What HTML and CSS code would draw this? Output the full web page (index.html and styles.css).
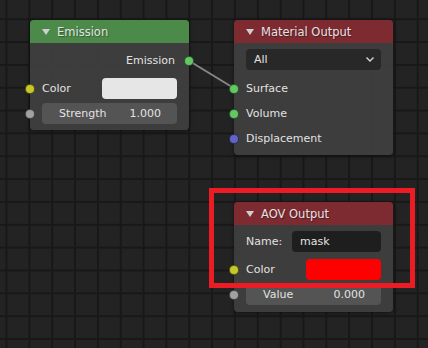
FILE: index.html
```html
<!DOCTYPE html>
<html lang="en">
<head>
    <meta charset="UTF-8">
    <title>Shader Editor</title>
    <link rel="stylesheet" href="styles.css">
</head>
<body>
    <div class="editor">
        <svg class="links" width="428" height="348">
            <line x1="188.5" y1="60.5" x2="234.5" y2="88.5" />
        </svg>

        <!-- Emission -->
        <div class="node node-emission">
            <div class="node-header header-shader">
                <svg class="collapse" width="8" height="6"><polygon points="0,0 8,0 4,6" /></svg>
                <span>Emission</span>
            </div>
            <div class="node-body">
                <div class="row row-output">
                    <span class="label">Emission</span>
                    <span class="socket socket-shader socket-out"></span>
                </div>
                <div class="row row-gap">
                    <span class="socket socket-color socket-in"></span>
                    <span class="label">Color</span>
                    <span class="swatch swatch-white"></span>
                </div>
                <div class="row row-tight">
                    <span class="socket socket-value socket-in"></span>
                    <div class="field field-num">
                        <span>Strength</span>
                        <span>1.000</span>
                    </div>
                </div>
            </div>
        </div>

        <!-- Material Output -->
        <div class="node node-material">
            <div class="node-header header-output">
                <svg class="collapse" width="8" height="6"><polygon points="0,0 8,0 4,6" /></svg>
                <span>Material Output</span>
            </div>
            <div class="node-body body-material">
                <div class="row">
                    <div class="field field-dropdown">
                        <span>All</span>
                        <svg class="chevron" width="8" height="5"><polyline points="0.5,0.5 4,4 7.5,0.5" /></svg>
                    </div>
                </div>
                <div class="row row-after-dropdown">
                    <span class="socket socket-shader socket-in"></span>
                    <span class="label">Surface</span>
                </div>
                <div class="row row-tight">
                    <span class="socket socket-shader socket-in"></span>
                    <span class="label">Volume</span>
                </div>
                <div class="row row-tight">
                    <span class="socket socket-vector socket-in"></span>
                    <span class="label">Displacement</span>
                </div>
            </div>
        </div>

        <!-- AOV Output -->
        <div class="node node-aov">
            <div class="node-header header-output">
                <svg class="collapse" width="8" height="6"><polygon points="0,0 8,0 4,6" /></svg>
                <span>AOV Output</span>
            </div>
            <div class="node-body body-aov">
                <div class="row">
                    <span class="label">Name:</span>
                    <div class="field field-text">mask</div>
                </div>
                <div class="row row-gap">
                    <span class="socket socket-color socket-in"></span>
                    <span class="label">Color</span>
                    <span class="swatch swatch-red"></span>
                </div>
                <div class="row row-tight">
                    <span class="socket socket-value socket-in"></span>
                    <div class="field field-num">
                        <span>Value</span>
                        <span>0.000</span>
                    </div>
                </div>
            </div>
        </div>

        <div class="highlight"></div>
    </div>
</body>
</html>
```

FILE: styles.css
```css
* {
    margin: 0;
    padding: 0;
    box-sizing: border-box;
}

:root {
    --canvas: #232323;
    --grid: #181818;
    --node: rgba(64, 64, 64, 0.93);
    --text: #e2e2e2;
    --green: #63c763;
    --yellow: #c7c729;
    --gray: #a1a1a1;
    --purple: #6363c7;
}

body {
    background: var(--canvas);
    font-family: 'DejaVu Sans', 'Liberation Sans', sans-serif;
    font-size: 11px;
    color: var(--text);
    overflow: hidden;
}

.editor {
    position: relative;
    width: 428px;
    height: 348px;
    background-color: var(--canvas);
    background-image:
        linear-gradient(to right, var(--grid) 1.5px, transparent 1.5px),
        linear-gradient(to bottom, var(--grid) 1.5px, transparent 1.5px);
    background-size: 22.85px 22.85px;
    background-position: 5.5px 18.2px;
}

.links {
    position: absolute;
    left: 0;
    top: 0;
}

.links line {
    stroke: #858585;
    stroke-width: 2;
    stroke-linecap: round;
}

/* nodes */
.node {
    position: absolute;
    width: 159px;
    background: var(--node);
    border-radius: 4px;
    box-shadow: 0 1px 4px rgba(0, 0, 0, 0.45);
}

.node-emission {
    left: 30px;
    top: 20px;
}

.node-material {
    left: 234px;
    top: 20px;
}

.node-aov {
    left: 234px;
    top: 202px;
}

.node-header {
    height: 23px;
    display: flex;
    align-items: center;
    padding-left: 12px;
    border-radius: 4px 4px 0 0;
    font-size: 11.5px;
    text-shadow: 1px 1px 1px rgba(0, 0, 0, 0.35);
}

.header-shader {
    background: #4c8a49;
}

.header-output {
    background: #7d2a31;
}

.collapse {
    margin-right: 7px;
    margin-top: 1px;
}

.collapse polygon {
    fill: #cfcfcf;
}

.node-body {
    padding: 7px 12px 6px;
}

.body-material {
    padding-top: 6px;
}

.body-aov {
    padding: 6px 12px 7px;
}

.row {
    position: relative;
    height: 21px;
    display: flex;
    align-items: center;
}

.row-output {
    justify-content: flex-end;
    padding-right: 2px;
}

.row-gap {
    margin-top: 7px;
}

.row-after-dropdown {
    margin-top: 8px;
}

.row-tight {
    margin-top: 4px;
}

.label {
    white-space: nowrap;
}

/* sockets */
.socket {
    position: absolute;
    top: 50%;
    width: 10px;
    height: 10px;
    margin-top: -5px;
    border-radius: 50%;
    border: 1px solid rgba(0, 0, 0, 0.55);
}

.socket-in {
    left: -17px;
}

.socket-out {
    right: -17px;
}

.socket-shader {
    background: var(--green);
}

.socket-color {
    background: var(--yellow);
}

.socket-value {
    background: var(--gray);
}

.socket-vector {
    background: var(--purple);
}

/* fields */
.swatch {
    margin-left: auto;
    width: 75px;
    height: 21px;
    border-radius: 4px;
}

.swatch-white {
    background: #e6e6e6;
}

.swatch-red {
    background: #ff0000;
}

.field {
    height: 21px;
    border-radius: 4px;
    display: flex;
    align-items: center;
}

.field-num {
    width: 100%;
    background: #545454;
    justify-content: space-between;
    padding: 0 16px 0 17px;
}

.field-dropdown {
    width: 100%;
    background: #282828;
    justify-content: space-between;
    padding: 0 7px 0 8px;
}

.chevron polyline {
    fill: none;
    stroke: #d8d8d8;
    stroke-width: 1.4;
}

.field-text {
    margin-left: auto;
    width: 89px;
    background: #1e1e1e;
    padding-left: 8px;
}

/* annotation */
.highlight {
    position: absolute;
    left: 209px;
    top: 188px;
    width: 206px;
    height: 100px;
    border: 5px solid #ed1c24;
}
```
